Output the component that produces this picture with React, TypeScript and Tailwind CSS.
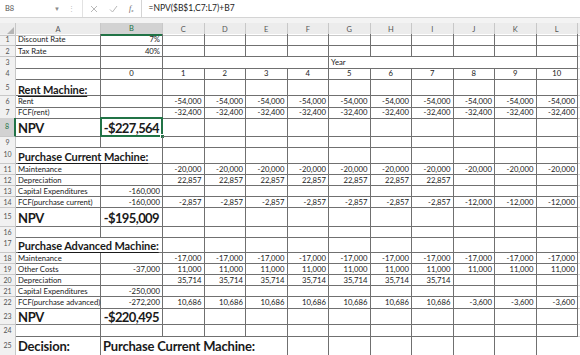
import React from "react";

type Cell = {
  t?: string;
  a?: "l" | "r" | "c";
  s?: "h" | "big" | "dec";
  span?: number;
  sel?: boolean;
};

type Row = { n: number; h: string; cells: Cell[] };

const GRID = "grid grid-cols-[16px_85px_62px_repeat(10,41.5px)_1fr]";
const LETTERS = ["A", "B", "C", "D", "E", "F", "G", "H", "I", "J", "K", "L"];

const SPAN: Record<number, string> = {
  1: "",
  2: "col-span-2",
  4: "col-span-4",
  6: "col-span-6",
};

const rep = (c: Cell, n: number): Cell[] => Array.from({ length: n }, () => ({ ...c }));
const num = (t: string): Cell => ({ t, a: "r" });
const empty = (n: number) => rep({}, n);

const rows: Row[] = [
  { n: 1, h: "h-[11.5px]", cells: [{ t: "Discount Rate" }, num("7%"), ...empty(10)] },
  { n: 2, h: "h-[11.5px]", cells: [{ t: "Tax Rate" }, num("40%"), ...empty(10)] },
  { n: 3, h: "h-[11px]", cells: [{}, {}, { span: 4 }, { t: "Year", span: 6 }] },
  {
    n: 4,
    h: "h-[11px]",
    cells: [{}, { t: "0", a: "c" }, ...Array.from({ length: 10 }, (_, i) => ({ t: String(i + 1), a: "c" as const }))],
  },
  { n: 5, h: "h-[17px]", cells: [{ t: "Rent Machine:", s: "h" }, ...empty(11)] },
  { n: 6, h: "h-[11px]", cells: [{ t: "Rent" }, {}, ...rep(num("-54,000"), 10)] },
  { n: 7, h: "h-[10.5px]", cells: [{ t: "FCF(rent)" }, {}, ...rep(num("-32,400"), 10)] },
  { n: 8, h: "h-[19px]", cells: [{ t: "NPV", s: "big" }, { t: "-$227,564", s: "big", a: "r", sel: true }, ...empty(10)] },
  { n: 9, h: "h-[9px]", cells: empty(12) },
  { n: 10, h: "h-[18px]", cells: [{ t: "Purchase Current Machine:", s: "h", span: 2 }, ...empty(10)] },
  { n: 11, h: "h-[11px]", cells: [{ t: "Maintenance" }, {}, ...rep(num("-20,000"), 10)] },
  { n: 12, h: "h-[11px]", cells: [{ t: "Depreciation" }, {}, ...rep(num("22,857"), 7), ...empty(3)] },
  { n: 13, h: "h-[11px]", cells: [{ t: "Capital Expenditures" }, num("-160,000"), ...empty(10)] },
  {
    n: 14,
    h: "h-[11px]",
    cells: [{ t: "FCF(purchase current)" }, num("-160,000"), ...rep(num("-2,857"), 7), ...rep(num("-12,000"), 3)],
  },
  { n: 15, h: "h-[19px]", cells: [{ t: "NPV", s: "big" }, { t: "-$195,009", s: "big", a: "r" }, ...empty(10)] },
  { n: 16, h: "h-[9px]", cells: empty(12) },
  { n: 17, h: "h-[17px]", cells: [{ t: "Purchase Advanced Machine:", s: "h", span: 2 }, ...empty(10)] },
  { n: 18, h: "h-[11px]", cells: [{ t: "Maintenance" }, {}, ...rep(num("-17,000"), 10)] },
  { n: 19, h: "h-[11px]", cells: [{ t: "Other Costs" }, num("-37,000"), ...rep(num("11,000"), 10)] },
  { n: 20, h: "h-[11px]", cells: [{ t: "Depreciation" }, {}, ...rep(num("35,714"), 7), ...empty(3)] },
  { n: 21, h: "h-[11.5px]", cells: [{ t: "Capital Expenditures" }, num("-250,000"), ...empty(10)] },
  {
    n: 22,
    h: "h-[11px]",
    cells: [{ t: "FCF(purchase advanced)" }, num("-272,200"), ...rep(num("10,686"), 7), ...rep(num("-3,600"), 3)],
  },
  { n: 23, h: "h-[17px]", cells: [{ t: "NPV", s: "big" }, { t: "-$220,495", s: "big", a: "r" }, ...empty(10)] },
  { n: 24, h: "h-[10.5px]", cells: empty(12) },
  {
    n: 25,
    h: "h-[20px]",
    cells: [{ t: "Decision:", s: "dec" }, { t: "Purchase Current Machine:", s: "dec", span: 4 }, ...empty(6)],
  },
];

function cellText(c: Cell) {
  if (c.s === "h") return "text-[11px] font-bold tracking-[-0.1px] underline underline-offset-[1.5px] pl-[2px]";
  if (c.s === "big")
    return c.a === "r"
      ? "text-[13px] font-bold tracking-[-0.6px] justify-end pr-[3px]"
      : "text-[13px] font-bold tracking-[-0.3px] pl-[2px]";
  if (c.s === "dec") return "text-[13px] font-bold tracking-[-0.2px] pl-[2px] pb-[1.5px]";
  if (c.a === "r") return "text-[7.7px] justify-end pr-[2px]";
  if (c.a === "c") return "text-[7.7px] justify-center";
  return "text-[7.7px] pl-[2px]";
}

function FormulaBar() {
  return (
    <div className="flex h-[17px] items-center bg-white text-[#8a8a8a]">
      <div className="flex h-full w-[64px] items-center justify-between pl-[5px] pr-[4px]">
        <span className="text-[7.5px] text-[#555]">B8</span>
        <span className="text-[6px]">▼</span>
      </div>
      <span className="ml-[4px] text-[7px] leading-none text-[#c0c0c0]">⋮</span>
      <div className="ml-[7px] flex h-full items-center gap-[11px] border-l border-[#e2e2e2] pl-[7px] pr-[8px]">
        <svg width="8" height="8" viewBox="0 0 8 8">
          <path d="M1 1 L7 7 M7 1 L1 7" stroke="#b8b8b8" strokeWidth="1" />
        </svg>
        <svg width="9" height="8" viewBox="0 0 9 8">
          <path d="M1 4.5 L3.5 7 L8 1" stroke="#b8b8b8" strokeWidth="1" fill="none" />
        </svg>
        <span className="font-['Liberation_Serif'] text-[8px] italic text-[#666]">
          f<sub className="text-[5px]">x</sub>
        </span>
      </div>
      <div className="flex h-full flex-1 items-center border-l border-[#d4d4d4] pl-[6px] text-[8.5px] text-[#222]">
        =NPV($B$1,C7:L7)+B7
      </div>
    </div>
  );
}

function HeaderRow() {
  return (
    <div className={`${GRID} h-[11px] bg-[#ececec] text-[7.5px] text-[#555]`}>
      <div className="relative border-r border-b border-[#c8c8c8]">
        <svg className="absolute right-[1px] bottom-[1px]" width="7" height="7" viewBox="0 0 7 7">
          <path d="M7 0 L7 7 L0 7 Z" fill="#b5b5b5" />
        </svg>
      </div>
      {LETTERS.map((l) => (
        <div
          key={l}
          className={
            l === "B"
              ? "flex items-center justify-center border-r border-b-2 border-r-[#c8c8c8] border-b-[#217346] bg-[#d2d2d2] text-[#217346]"
              : "flex items-center justify-center border-r border-b border-[#c8c8c8]"
          }
        >
          {l}
        </div>
      ))}
      <div className="border-b border-[#c8c8c8]" />
    </div>
  );
}

function SheetRow({ row }: { row: Row }) {
  const selRow = row.n === 8;
  return (
    <div className={`${GRID} ${row.h}`}>
      <div
        className={
          selRow
            ? "flex items-center justify-center border-r-2 border-b border-r-[#217346] border-b-[#c8c8c8] bg-[#d2d2d2] text-[7px] text-[#217346]"
            : "flex items-center justify-center border-r border-b border-[#c8c8c8] bg-[#f1f1f1] text-[7px] text-[#555]"
        }
      >
        {row.n}
      </div>
      {row.cells.map((c, i) => (
        <div
          key={i}
          className={`relative flex items-end overflow-visible whitespace-nowrap border-r border-b border-[#707070] pb-[0.5px] leading-none text-[#1a1a1a] ${SPAN[c.span ?? 1]} ${cellText(c)}`}
        >
          {c.t}
          {c.sel && (
            <>
              <div className="pointer-events-none absolute -top-[1px] -left-[1px] -right-[1px] -bottom-[1px] border-2 border-[#217346]" />
              <div className="absolute -right-[3px] -bottom-[3px] h-[5px] w-[5px] border border-white bg-[#217346]" />
            </>
          )}
        </div>
      ))}
      <div className="border-b border-[#d4d4d4]" />
    </div>
  );
}

export default function App() {
  return (
    <div className="h-[355px] w-[580px] overflow-hidden bg-white font-['Lato',sans-serif]">
      <FormulaBar />
      <div className="h-[6px] border-t border-[#d4d4d4] bg-[#f3f3f3]" />
      <HeaderRow />
      {rows.map((r) => (
        <SheetRow key={r.n} row={r} />
      ))}
    </div>
  );
}
